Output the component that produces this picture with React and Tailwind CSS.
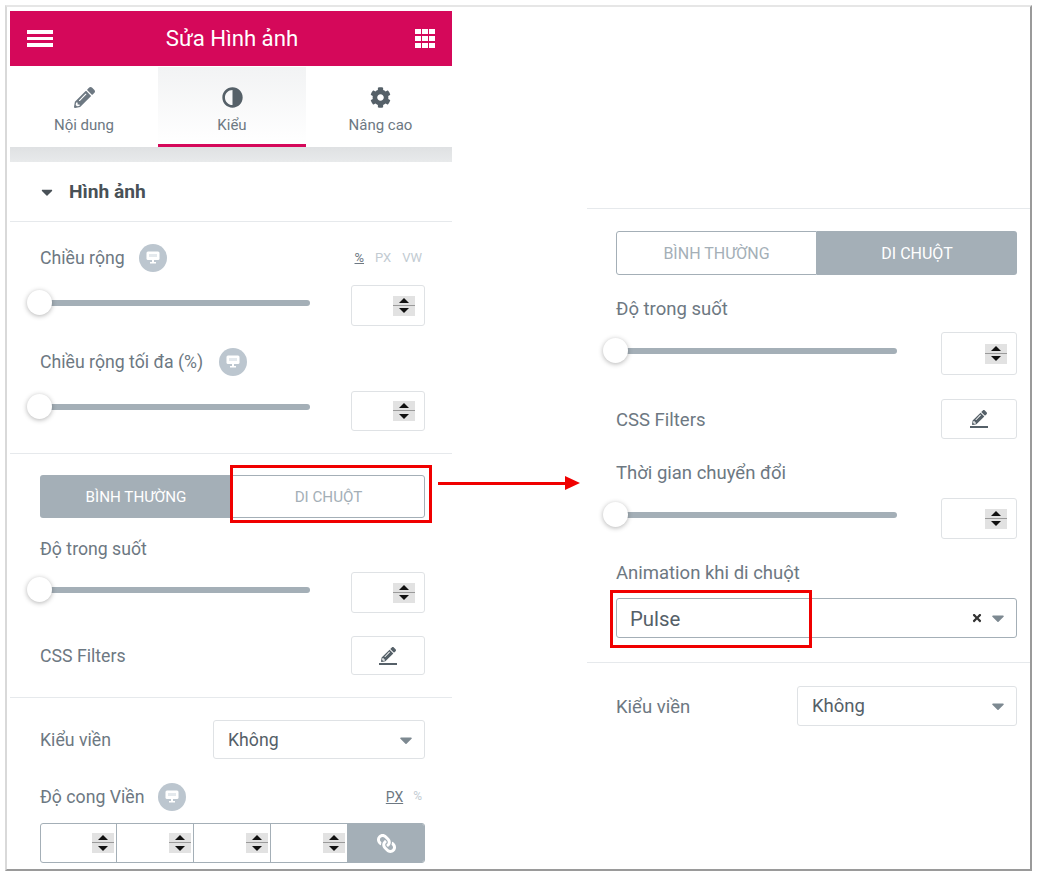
import { FaPencilAlt, FaAdjust, FaCog, FaLink, FaCaretDown, FaTimes } from "react-icons/fa";

function Spinner() {
  return (
    <div className="flex h-[20px] w-[22px] flex-col bg-[#e2e2e2]">
      <div className="flex h-[10px] items-center justify-center border-b border-[#9a9a9a]">
        <div className="h-0 w-0 border-x-[5px] border-b-[5px] border-x-transparent border-b-[#111]" />
      </div>
      <div className="flex h-[10px] items-center justify-center">
        <div className="h-0 w-0 border-x-[5px] border-t-[5px] border-x-transparent border-t-[#111]" />
      </div>
    </div>
  );
}

function NumberBox({ w, h }) {
  return (
    <div className={`flex shrink-0 items-center justify-end rounded-[3px] border border-[#dfe2e5] pr-[9px] ${w} ${h}`}>
      <Spinner />
    </div>
  );
}

function Slider({ w, top }) {
  return (
    <div className={`relative h-[6px] rounded-full bg-[#a4afb7] ${w} ${top}`}>
      <div className="absolute left-[-13px] top-[-10px] h-[25px] w-[25px] rounded-full bg-white shadow-[0_1px_5px_rgba(0,0,0,0.3)]" />
    </div>
  );
}

function Responsive() {
  return (
    <span className="-mt-[1px] flex h-[28px] w-[28px] items-center justify-center rounded-full bg-[#bcc6cf]">
      <svg width="14" height="13" viewBox="0 0 14 13" fill="none">
        <rect x="0.5" y="0.5" width="13" height="8.5" rx="1.5" fill="#fff" />
        <rect x="3" y="3" width="8" height="3" fill="#e4e9ed" />
        <rect x="6" y="9" width="2" height="2" fill="#fff" />
        <rect x="4" y="11" width="6" height="1.5" fill="#fff" />
      </svg>
    </span>
  );
}

function SliderRow({ w, top, box, boxH, pad = "pl-[30px]", pr = "pr-[27px]" }) {
  return (
    <div className={`flex items-start justify-between ${pad} ${pr}`}>
      <Slider w={w} top={top} />
      <NumberBox w={box} h={boxH} />
    </div>
  );
}

function EditButton({ w, h }) {
  return (
    <div className={`flex flex-col items-center justify-center rounded-[3px] border border-[#dfe2e5] text-[#556068] ${w} ${h}`}>
      <FaPencilAlt className="text-[15px]" />
      <div className="mt-[1px] h-[2px] w-[18px] bg-[#556068]" />
    </div>
  );
}

function SelectBox({ w, h, value, text, pl, clear }) {
  return (
    <div className={`flex items-center justify-between rounded-[3px] border pr-[8px] text-[#556068] ${w} ${h} ${text} ${pl} ${clear ? "border-[#a4afb7]" : "border-[#dfe2e5]"}`}>
      <span className="pt-[2px]">{value}</span>
      <span className="flex items-center gap-[5px]">
        {clear && <FaTimes className="text-[12px] text-[#333]" />}
        <FaCaretDown className="text-[20px] text-[#7d8991]" />
      </span>
    </div>
  );
}

function LeftPanel() {
  return (
    <div className="w-[442px] shrink-0 pt-[4px] text-[17.7px] text-[#6d7882]">
      <div className="flex h-[55px] items-center justify-between bg-[#d5085a] pl-[17px] pr-[17px] text-white">
        <div className="flex w-[26px] flex-col gap-[3px]">
          <div className="h-[3.5px] bg-white" />
          <div className="h-[3.5px] bg-white" />
          <div className="h-[3.5px] bg-white" />
        </div>
        <span className="mr-[4px] text-[22.2px]">Sửa Hình ảnh</span>
        <div className="grid w-[20px] grid-cols-3 gap-[1.5px]">
          {[0, 1, 2, 3, 4, 5, 6, 7, 8].map((i) => (
            <div key={i} className="h-[5.5px] bg-white" />
          ))}
        </div>
      </div>

      <div className="mt-[1px] grid h-[80px] grid-cols-[148px_148px_146px] text-[15px]">
        <div className="flex flex-col items-center pt-[20px]">
          <FaPencilAlt className="text-[21px] text-[#6d7882]" />
          <span className="mt-[6px]">Nội dung</span>
        </div>
        <div className="flex flex-col items-center border-b-[3px] border-[#d5085a] bg-gradient-to-b from-[#f2f3f4] to-white pt-[20px]">
          <FaAdjust className="-scale-x-100 text-[21px] text-[#556068]" />
          <span className="mt-[6px]">Kiểu</span>
        </div>
        <div className="flex flex-col items-center pl-[3px] pt-[20px]">
          <FaCog className="text-[21px] text-[#556068]" />
          <span className="mt-[6px]">Nâng cao</span>
        </div>
      </div>
      <div className="h-[15px] bg-gradient-to-b from-[#dfe1e3] to-[#e8eaeb]" />

      <div className="flex h-[60px] items-center border-b border-[#e6e9ec] pl-[28px]">
        <FaCaretDown className="text-[18px] text-[#495157]" />
        <span className="ml-[13px] pt-[1px] text-[19.2px] font-bold text-[#495157]">Hình ảnh</span>
      </div>

      <div className="mt-[21px] flex h-[30px] items-center justify-between pl-[30px] pr-[30px]">
        <div className="flex items-center gap-[14px]">
          <span>Chiều rộng</span>
          <Responsive />
        </div>
        <div className="flex gap-[11px] text-[13px] text-[#c2cbd2]">
          <span className="text-[#6d7882] underline">%</span>
          <span>PX</span>
          <span>VW</span>
        </div>
      </div>
      <div className="mt-[12px]">
        <SliderRow w="w-[270px]" top="mt-[15px]" box="w-[74px]" boxH="h-[41px]" />
      </div>

      <div className="mt-[21px] flex h-[30px] items-center gap-[16px] pl-[30px]">
        <span>Chiều rộng tối đa (%)</span>
        <Responsive />
      </div>
      <div className="mt-[14px]">
        <SliderRow w="w-[270px]" top="mt-[13px]" box="w-[74px]" boxH="h-[40px]" />
      </div>

      <div className="mt-[22px] border-t border-[#e6e9ec] pl-[30px] pr-[27px] pt-[21px]">
        <div className="flex h-[43px] text-[15.2px]">
          <div className="flex w-[192px] items-center justify-center rounded-l-[3px] bg-[#a4afb7] pt-[1px] text-white">BÌNH THƯỜNG</div>
          <div className="flex flex-1 items-center justify-center rounded-r-[3px] border border-[#a4afb7] pt-[1px] text-[#a4afb7]">DI CHUỘT</div>
        </div>
      </div>

      <div className="mt-[18px] h-[26px] pl-[30px] leading-[26px]">Độ trong suốt</div>
      <div className="mt-[10px]">
        <SliderRow w="w-[270px]" top="mt-[15px]" box="w-[74px]" boxH="h-[41px]" />
      </div>

      <div className="mt-[23px] flex items-center justify-between pl-[30px] pr-[27px]">
        <span className="pt-[2px]">CSS Filters</span>
        <EditButton w="w-[74px]" h="h-[39px]" />
      </div>

      <div className="mt-[22px] border-t border-[#e6e9ec] pl-[30px] pr-[27px] pt-[22px]">
        <div className="flex items-center justify-between">
          <span className="pt-[2px]">Kiểu viền</span>
          <SelectBox w="w-[212px]" h="h-[39px]" text="text-[17.7px]" pl="pl-[14px]" value="Không" />
        </div>
      </div>

      <div className="mt-[23px] flex h-[30px] items-center justify-between pl-[30px] pr-[30px]">
        <div className="flex items-center gap-[14px]">
          <span>Độ cong Viền</span>
          <Responsive />
        </div>
        <div className="flex gap-[10px] text-[14px] text-[#c2cbd2]">
          <span className="text-[#6d7882] underline">PX</span>
          <span className="text-[12px]">%</span>
        </div>
      </div>

      <div className="ml-[30px] mt-[11px] flex h-[40px] w-[385px] overflow-hidden rounded-[3px] border border-[#a4afb7]">
        <div className="flex w-[76px] items-center justify-end border-r border-[#a4afb7] pr-[2px]">
          <Spinner />
        </div>
        {[1, 2, 3].map((i) => (
          <div key={i} className="flex w-[77px] items-center justify-end border-r border-[#a4afb7] pr-[2px]">
            <Spinner />
          </div>
        ))}
        <div className="flex flex-1 items-center justify-center bg-[#a4afb7] text-[19px] text-white">
          <FaLink className="-scale-x-100" />
        </div>
      </div>
    </div>
  );
}

function RightPanel() {
  return (
    <div className="ml-[135px] flex-1 pt-[201px] text-[18.5px] text-[#6d7882]">
      <div className="border-t border-[#e6e9ec] pl-[29px] pr-[13px] pt-[22px]">
        <div className="flex h-[44px] text-[16px]">
          <div className="flex w-[201px] items-center justify-center rounded-l-[3px] border border-[#a4afb7] pt-[1px] text-[#a4afb7]">BÌNH THƯỜNG</div>
          <div className="flex flex-1 items-center justify-center rounded-r-[3px] bg-[#a4afb7] pt-[1px] text-white">DI CHUỘT</div>
        </div>
      </div>
      <div className="mt-[21px] h-[26px] pl-[29px] leading-[26px]">Độ trong suốt</div>
      <div className="mt-[10px]">
        <SliderRow w="w-[281px]" top="mt-[16px]" box="w-[76px]" boxH="h-[43px]" pad="pl-[29px]" pr="pr-[13px]" />
      </div>
      <div className="mt-[24px] flex items-center justify-between pl-[29px] pr-[13px]">
        <span className="pt-[3px]">CSS Filters</span>
        <EditButton w="w-[76px]" h="h-[40px]" />
      </div>
      <div className="mt-[21px] h-[26px] pl-[29px] leading-[26px]">Thời gian chuyển đổi</div>
      <div className="mt-[12px]">
        <SliderRow w="w-[281px]" top="mt-[14px]" box="w-[76px]" boxH="h-[41px]" pad="pl-[29px]" pr="pr-[13px]" />
      </div>
      <div className="mt-[21px] h-[26px] pl-[29px] leading-[26px]">Animation khi di chuột</div>
      <div className="mt-[12px] pl-[29px] pr-[13px]">
        <SelectBox w="w-full" h="h-[40px]" text="text-[20.4px]" pl="pl-[13px]" value="Pulse" clear />
      </div>
      <div className="mt-[24px] border-t border-[#e6e9ec] pl-[29px] pr-[13px] pt-[23px]">
        <div className="flex items-center justify-between">
          <span className="pt-[3px]">Kiểu viền</span>
          <SelectBox w="w-[220px]" h="h-[40px]" text="text-[18.5px]" pl="pl-[14px]" value="Không" />
        </div>
      </div>
    </div>
  );
}

export default function App() {
  return (
    <div className="relative h-[876px] w-[1037px] overflow-hidden bg-white p-[5px] font-['Roboto',sans-serif]">
      <div className="flex h-[866px] w-[1027px] border-y-2 border-l-2 border-r-2 border-b-[#9a9a9a] border-l-[#d9d9d9] border-r-[#9a9a9a] border-t-[#e6e6e6] bg-white pl-[3px]">
        <LeftPanel />
        <RightPanel />
      </div>

      {/* red callouts */}
      <div className="absolute left-[230px] top-[465px] h-[58px] w-[202px] border-[3px] border-[#f00000]" />
      <div className="absolute left-[610px] top-[590px] h-[58px] w-[202px] border-[3px] border-[#f00000]" />
      <div className="absolute left-[438px] top-[482px] h-[3px] w-[128px] bg-[#f00000]" />
      <div className="absolute left-[565px] top-[476px] h-0 w-0 border-y-[7px] border-l-[15px] border-y-transparent border-l-[#f00000]" />
    </div>
  );
}
